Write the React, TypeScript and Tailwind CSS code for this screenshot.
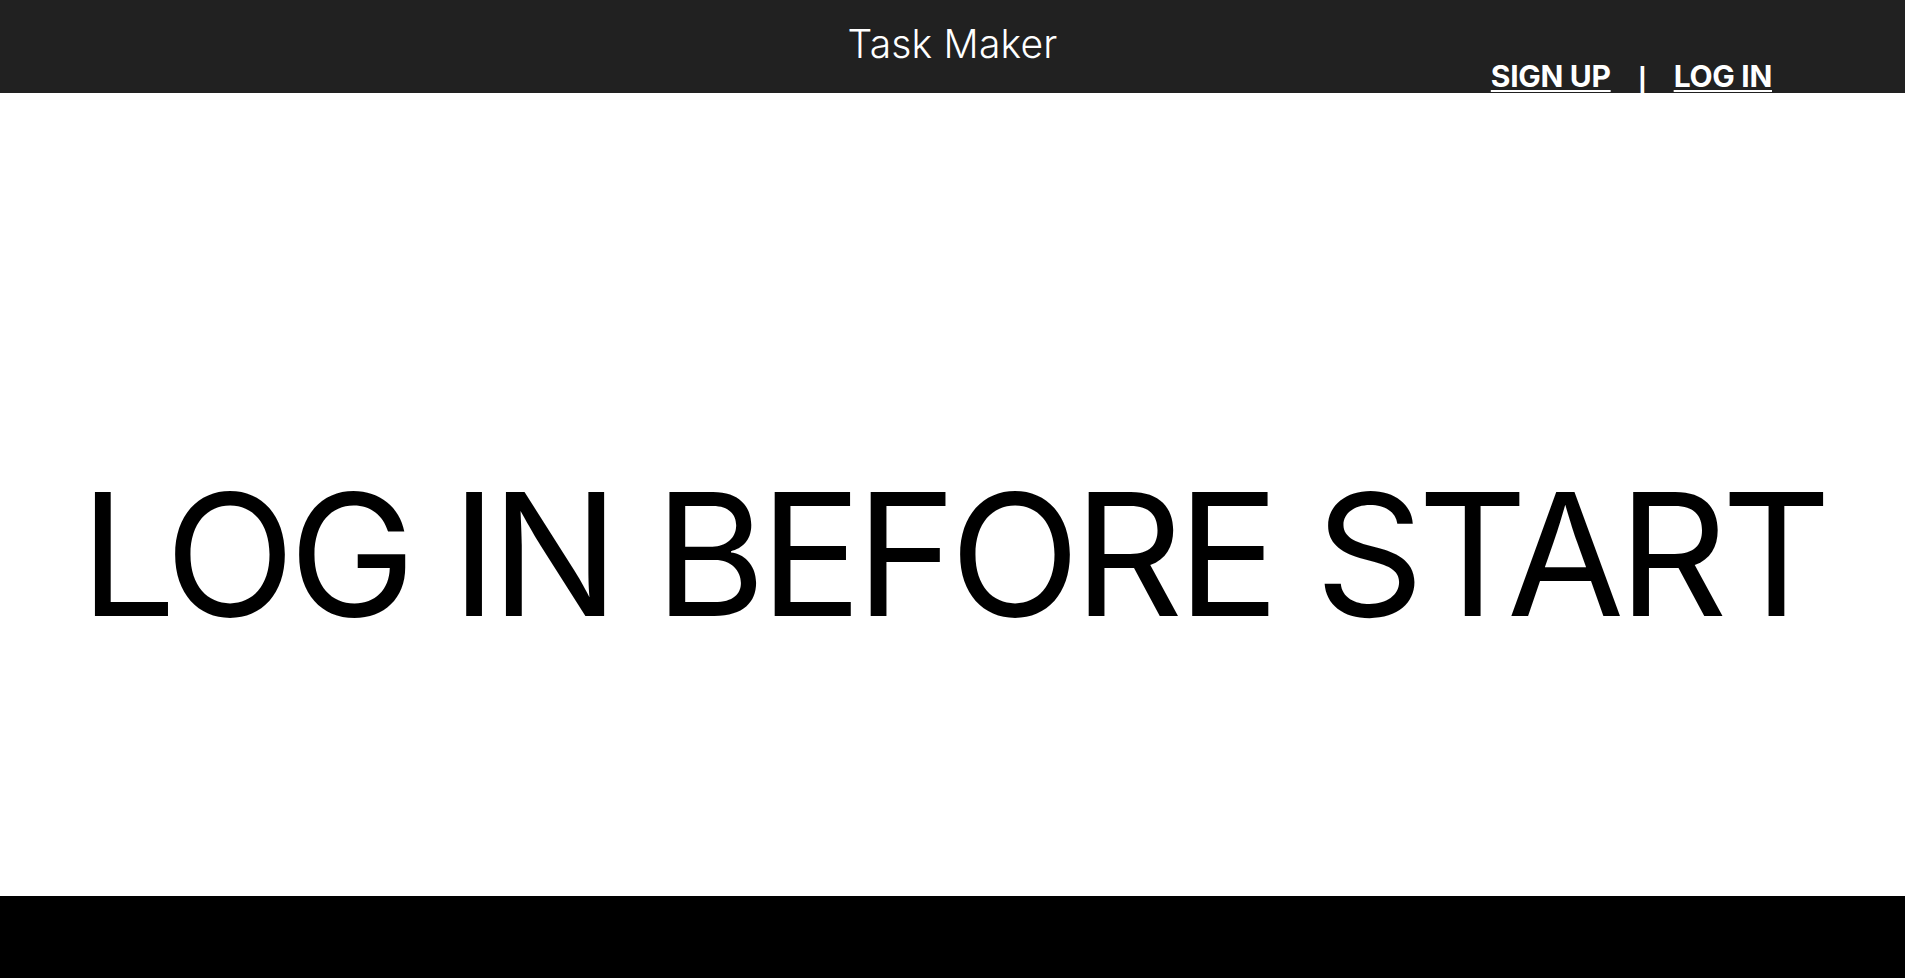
import React from "react";

export default function App() {
  return (
    <div className="flex h-[978px] w-full flex-col bg-white" style={{ fontFamily: "Inter, 'Noto Sans', sans-serif" }}>
      <header className="grid h-[93px] shrink-0 grid-cols-[1fr_auto_1fr] bg-[#212121] text-white">
        <div />
        <h1 className="pt-[24px] text-[39px] font-light leading-none tracking-[0.005em]">Task Maker</h1>
        <nav className="flex items-start justify-end gap-[27px] pr-[133px] pt-[61px] text-[30px] font-bold leading-none tracking-[-0.01em]">
          <a href="#" className="underline decoration-2 underline-offset-[3px]">SIGN UP</a>
          <span className="pt-[8px] text-[25px] font-bold leading-none">|</span>
          <a href="#" className="underline decoration-2 underline-offset-[3px]">LOG IN</a>
        </nav>
      </header>
      <main className="flex-1 pt-[376px] text-center">
        <p className="text-[170px] font-normal leading-none tracking-[-0.036em] text-black">LOG IN BEFORE START</p>
      </main>
      <footer className="h-[82px] shrink-0 bg-black" />
    </div>
  );
}
